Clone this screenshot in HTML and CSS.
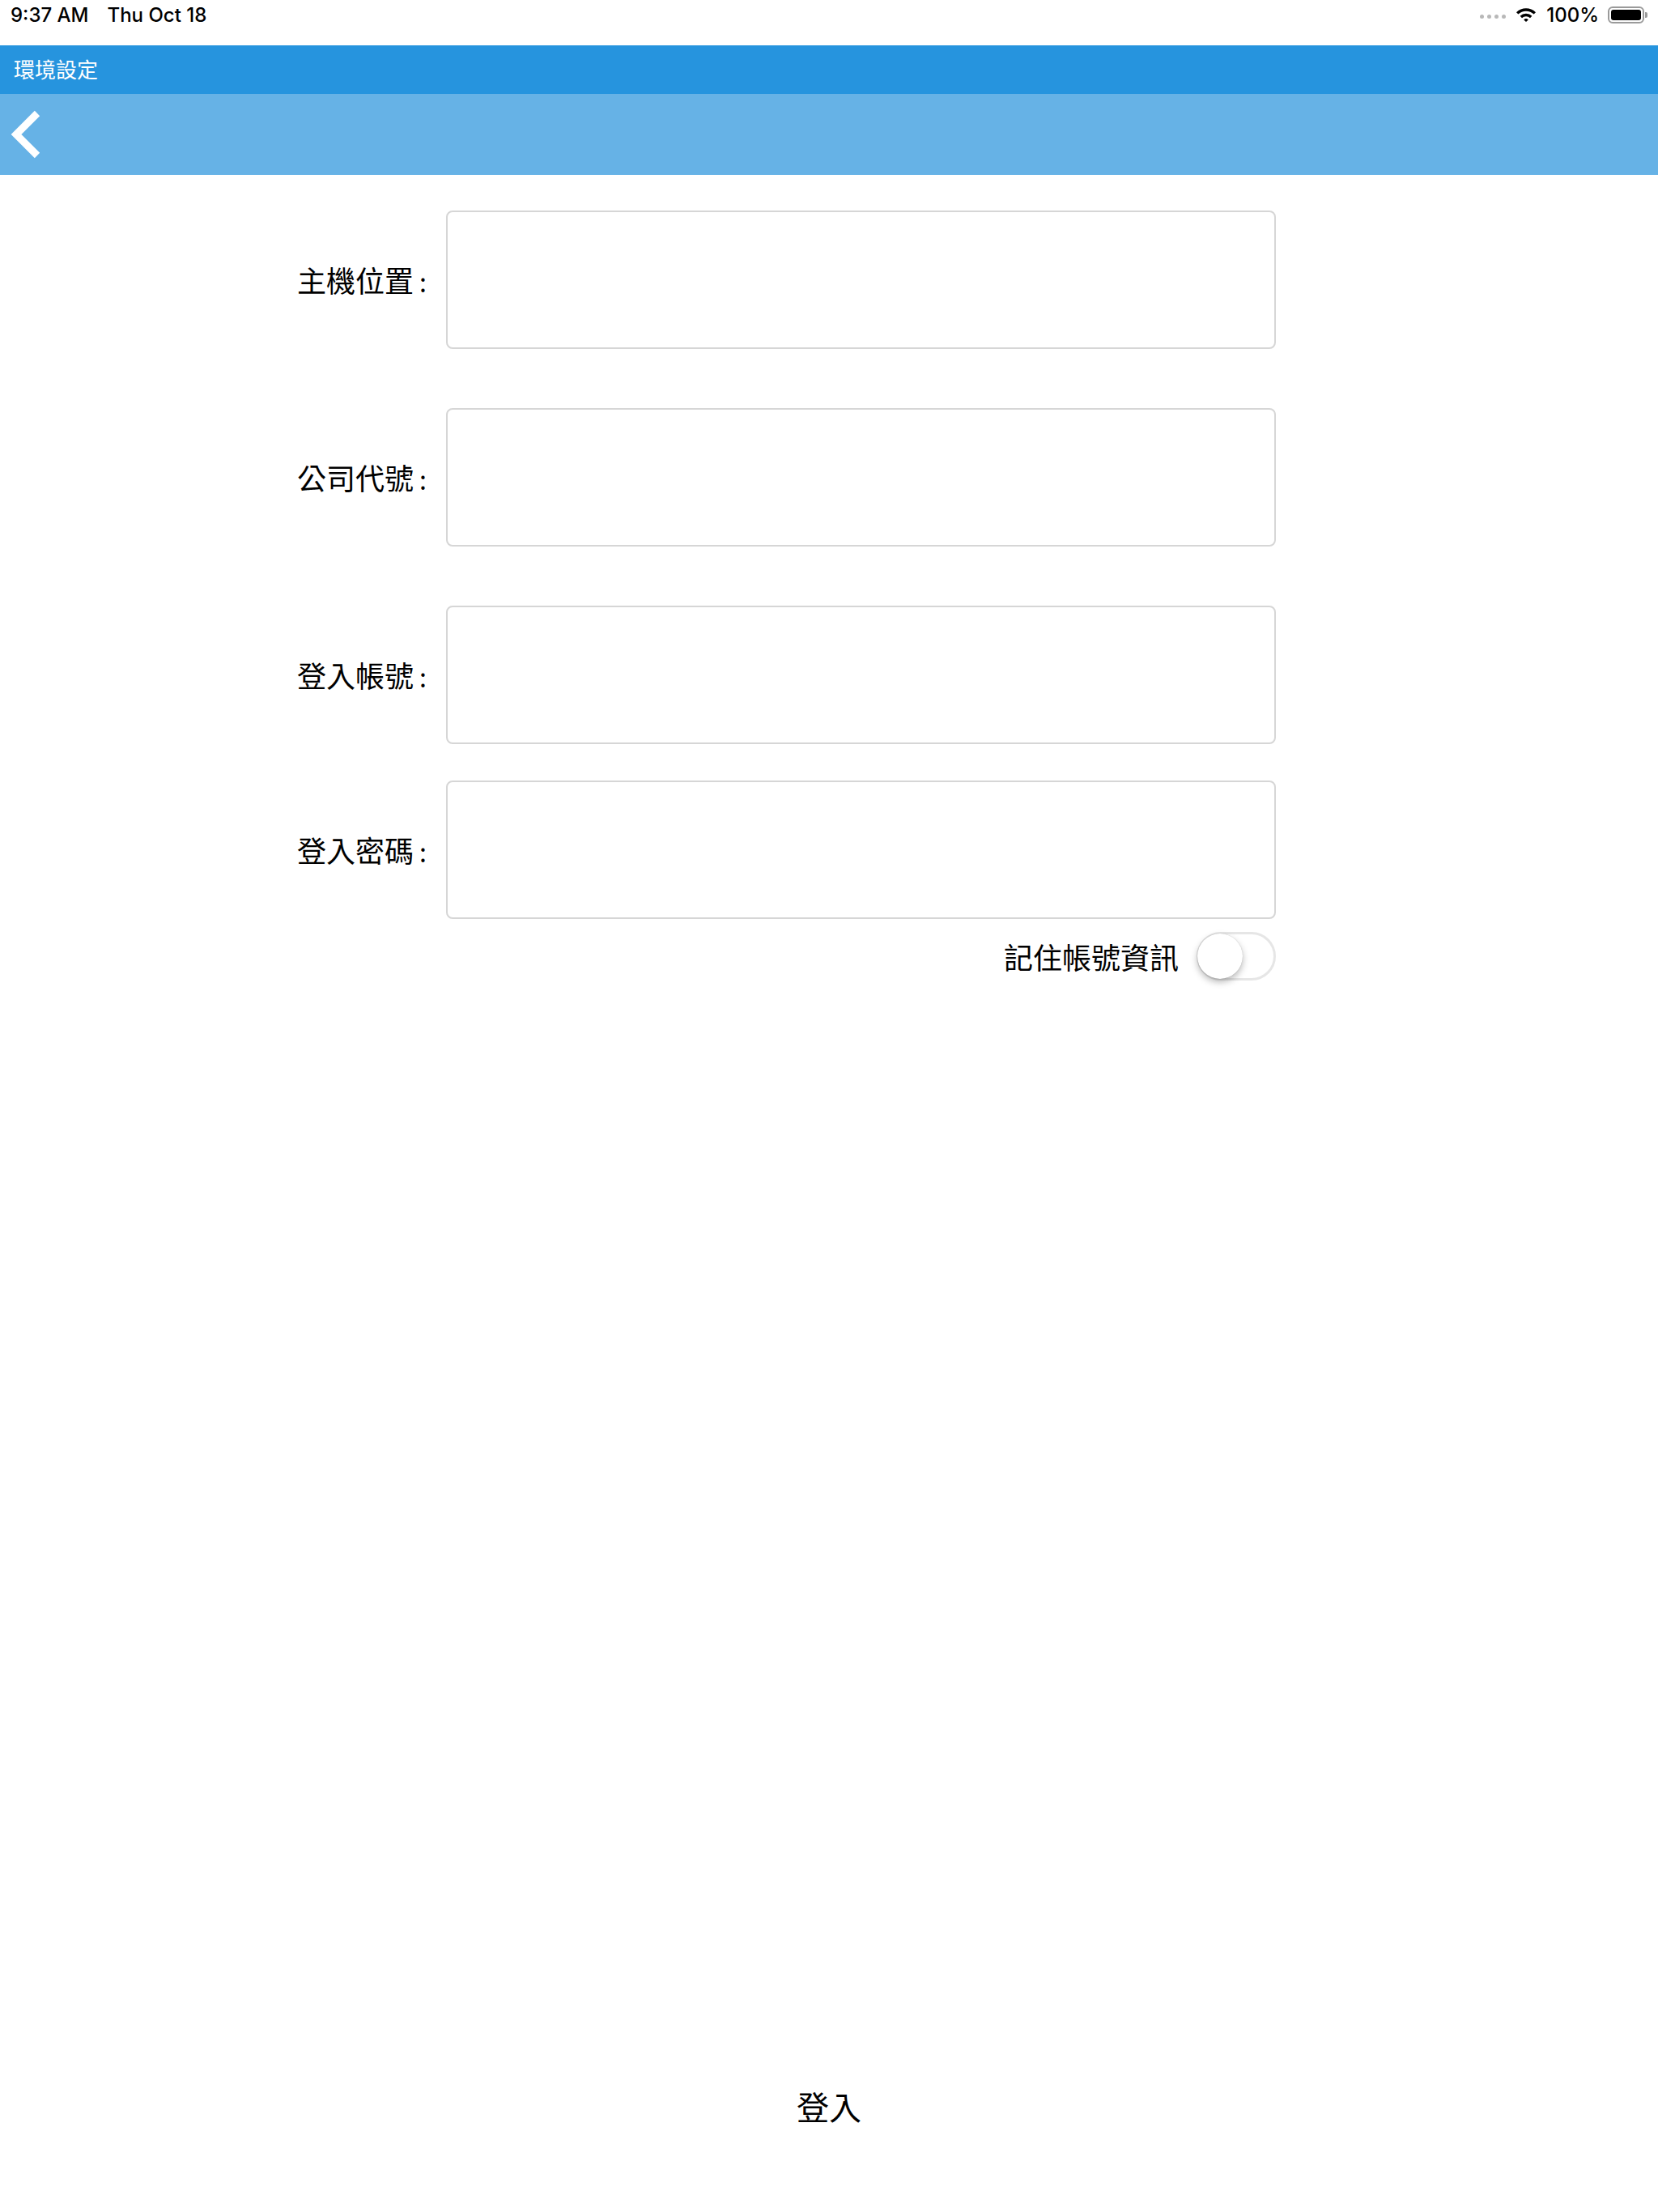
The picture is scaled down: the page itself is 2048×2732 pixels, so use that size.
FILE: index.html
```html
<!DOCTYPE html>
<html lang="zh-Hant">
<head>
<meta charset="utf-8">
<title>環境設定</title>
<link rel="stylesheet" href="styles.css">
</head>
<body>
<div class="page">
  <header class="status-bar">
    <div class="status-left">
      <span>9:37 AM</span>
      <span>Thu Oct 18</span>
    </div>
    <div class="status-right">
      <span class="signal"><i></i><i></i><i></i><i></i></span>
      <svg class="wifi" width="26" height="18" viewBox="0 0 26 18">
        <path d="M1 6.2 A17 17 0 0 1 25 6.2 L22.6 8.6 A13.6 13.6 0 0 0 3.4 8.6 Z" fill="#000"/>
        <path d="M5.6 10.8 A10.5 10.5 0 0 1 20.4 10.8 L18 13.2 A7.2 7.2 0 0 0 8 13.2 Z" fill="#000"/>
        <path d="M10.2 15.4 A4 4 0 0 1 15.8 15.4 L13 18 Z" fill="#000"/>
      </svg>
      <span class="battery-pct">100%</span>
      <span class="battery"><span class="battery-fill"></span></span>
      <span class="battery-nub"></span>
    </div>
  </header>

  <div class="title-bar">環境設定</div>

  <nav class="nav-bar">
    <svg class="back" width="40" height="60" viewBox="0 0 40 60">
      <polyline points="34,4 8,30 34,56" fill="none" stroke="#fff" stroke-width="9" stroke-linejoin="miter"/>
    </svg>
  </nav>

  <main class="form">
    <div class="field">
      <label class="field-label">主機位置<span class="colon">:</span></label>
      <div class="field-input"></div>
    </div>
    <div class="field">
      <label class="field-label">公司代號<span class="colon">:</span></label>
      <div class="field-input"></div>
    </div>
    <div class="field">
      <label class="field-label">登入帳號<span class="colon">:</span></label>
      <div class="field-input"></div>
    </div>
    <div class="field field-tight">
      <label class="field-label">登入密碼<span class="colon">:</span></label>
      <div class="field-input"></div>
    </div>
    <div class="remember">
      <span class="remember-label">記住帳號資訊</span>
      <span class="switch"><span class="knob"></span></span>
    </div>
  </main>

  <footer class="login">
    <button class="login-btn" type="button">登入</button>
  </footer>
</div>
</body>
</html>
```

FILE: styles.css
```css
html, body {
  margin: 0;
  padding: 0;
  background: #fff;
}

.page {
  width: 2048px;
  min-height: 2732px;
  display: flex;
  flex-direction: column;
  font-family: "Noto Sans CJK TC", "Noto Sans", sans-serif;
  color: #000;
}

/* status bar */
.status-bar {
  height: 56px;
  display: flex;
  align-items: flex-start;
  justify-content: space-between;
  padding: 4px 13px 0 13px;
  box-sizing: border-box;
  font-family: Inter, "Liberation Sans", sans-serif;
  font-size: 24px;
  line-height: 29px;
  font-weight: 500;
}

.status-left {
  display: flex;
  gap: 23px;
}

.status-right {
  display: flex;
  align-items: center;
  height: 29px;
}

.signal {
  display: flex;
  gap: 4px;
  margin-right: 12px;
  margin-top: 4px;
}

.signal i {
  width: 5px;
  height: 5px;
  border-radius: 50%;
  background: #b8b8b8;
}

.wifi {
  margin-right: 12px;
  margin-top: -2px;
}

.battery-pct {
  margin-right: 11px;
}

.battery {
  width: 45px;
  height: 21px;
  border: 2px solid #9a9a9a;
  border-radius: 6px;
  box-sizing: border-box;
  padding: 2px;
  display: flex;
}

.battery-fill {
  flex: 1;
  background: #000;
  border-radius: 3px;
}

.battery-nub {
  width: 3px;
  height: 7px;
  background: #9a9a9a;
  border-radius: 0 2px 2px 0;
  margin-left: 1px;
}

/* title bar */
.title-bar {
  height: 60px;
  background: #2694de;
  color: #fff;
  font-size: 26px;
  display: flex;
  align-items: center;
  padding-left: 17px;
  padding-bottom: 4px;
  box-sizing: border-box;
}

/* navigation bar */
.nav-bar {
  height: 100px;
  background: #66b2e6;
  display: flex;
  align-items: center;
}

.back {
  margin-left: 12px;
}

/* form */
.form {
  padding-top: 44px;
  margin-left: 327px;
  width: 1249px;
  display: flex;
  flex-direction: column;
}

.field {
  display: grid;
  grid-template-columns: 200px 1025px;
  column-gap: 24px;
  align-items: center;
  margin-bottom: 73px;
}

.form .field:nth-child(3) {
  margin-bottom: 45px;
}

.form .field-tight {
  margin-bottom: 16px;
}

.field-label {
  text-align: right;
  font-size: 36px;
  font-weight: 400;
  line-height: 1;
  padding-bottom: 2px;
}

.colon {
  margin-left: 7px;
  font-size: 32px;
}

.field-input {
  height: 171px;
  border: 2px solid #d6d6d6;
  border-radius: 8px;
  box-sizing: border-box;
  background: #fff;
}

.remember {
  display: flex;
  align-items: center;
  justify-content: flex-end;
  gap: 22px;
}

.remember-label {
  font-size: 36px;
  font-weight: 400;
  line-height: 1;
}

.switch {
  width: 98px;
  height: 60px;
  border: 3px solid #e6e6e6;
  border-radius: 30px;
  box-sizing: border-box;
  position: relative;
  background: #fff;
}

.knob {
  position: absolute;
  left: -2px;
  top: -1px;
  width: 56px;
  height: 56px;
  border-radius: 50%;
  background: #fff;
  box-shadow: 0 4px 8px rgba(0, 0, 0, 0.28), 0 0 1px rgba(0, 0, 0, 0.25);
}

/* login */
.login {
  margin-top: auto;
  display: flex;
  justify-content: center;
  padding-bottom: 81px;
}

.login-btn {
  height: 100px;
  padding: 0 40px;
  border: none;
  background: transparent;
  font-family: "Noto Sans CJK TC", sans-serif;
  font-size: 40px;
  font-weight: 400;
  color: #000;
}
```
